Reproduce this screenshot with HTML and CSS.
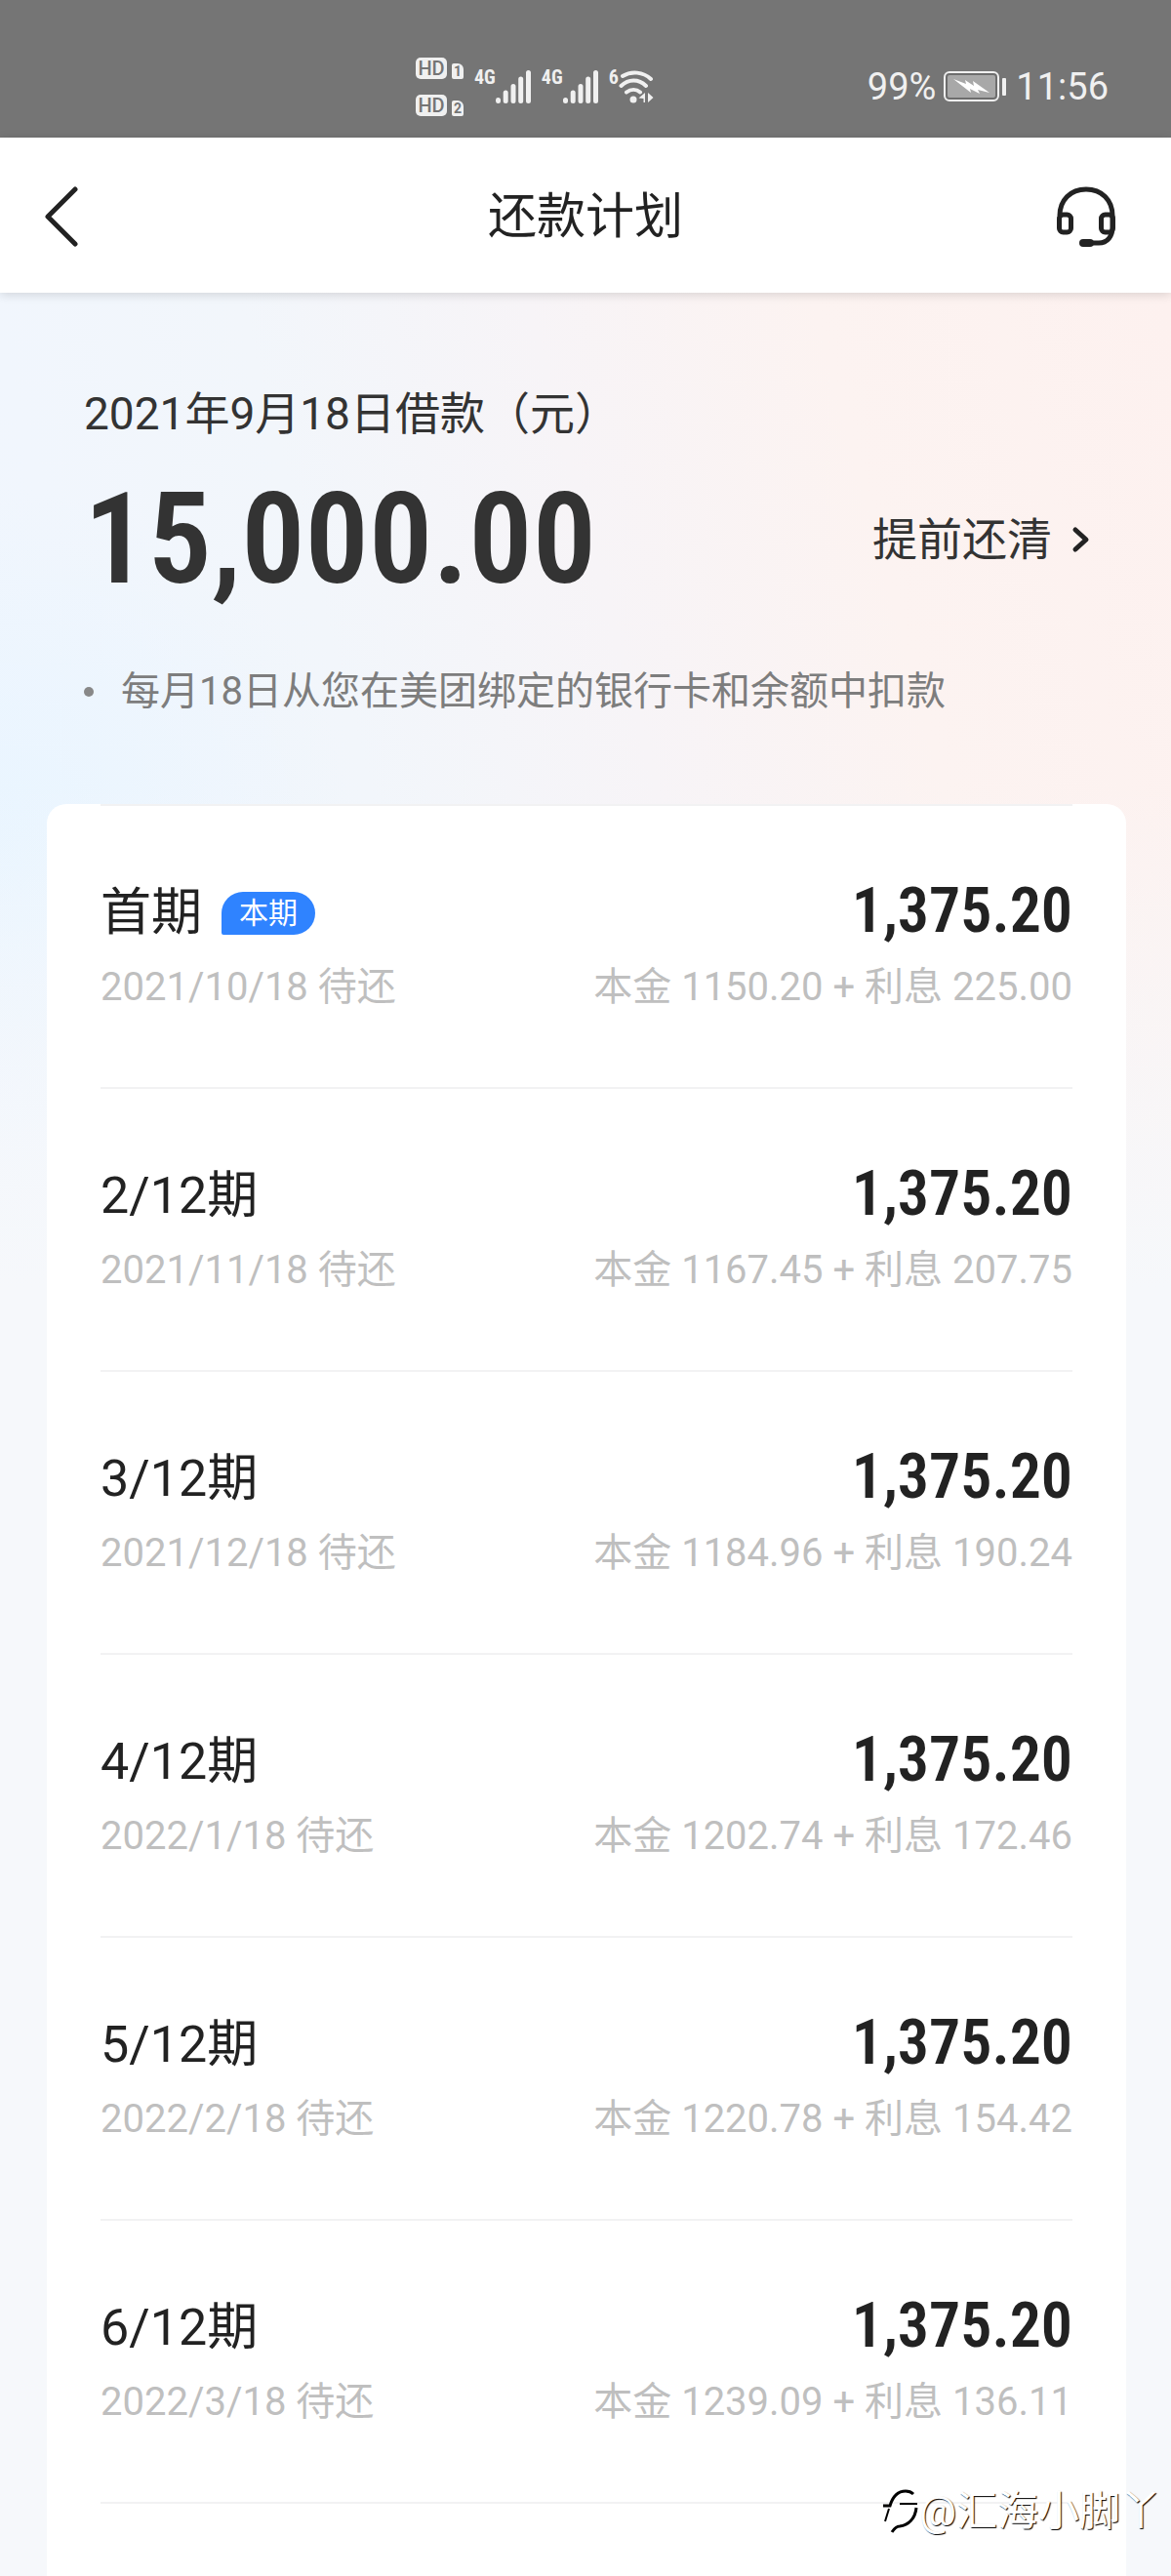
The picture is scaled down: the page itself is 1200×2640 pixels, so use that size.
FILE: index.html
```html
<!DOCTYPE html>
<html lang="zh-CN">

<head>
    <meta charset="UTF-8">
    <meta name="viewport" content="width=device-width, initial-scale=1.0">
    <title>还款计划</title>
    <link rel="stylesheet" href="styles.css">
</head>

<body>
    <!-- 状态栏 -->
    <div class="status">
        <div class="status-net">
            <div class="hd-list">
                <p class="hd"><span class="hd-tag">HD</span><span class="sim">1</span></p>
                <p class="hd"><span class="hd-tag">HD</span><span class="sim">2</span></p>
            </div>
            <div class="signal">
                <span class="net-type">4G</span>
                <svg width="36" height="36" viewBox="0 0 36 36" stroke="#f0f0f0" stroke-width="5" stroke-linecap="round">
                    <path d="M2.5 31.5v1M10.2 24v8.5M18 17.5v15M25.7 10v22.5M33.5 3.5v29" />
                </svg>
            </div>
            <div class="signal">
                <span class="net-type">4G</span>
                <svg width="36" height="36" viewBox="0 0 36 36" stroke="#f0f0f0" stroke-width="5" stroke-linecap="round">
                    <path d="M2.5 31.5v1M10.2 24v8.5M18 17.5v15M25.7 10v22.5M33.5 3.5v29" />
                </svg>
            </div>
            <div class="signal wifi">
                <span class="net-type">6</span>
                <svg width="36" height="36" viewBox="0 0 36 36" fill="none" stroke="#f0f0f0" stroke-width="4" stroke-linecap="round">
                    <path d="M4 7C13 1.5 25 2.5 33 10M2.5 17C10 10 20 9.5 28 17M8 23.5C12.5 20 18 20 22 23.5" />
                    <circle cx="15" cy="31" r="3.5" fill="#f0f0f0" stroke="none" />
                    <path d="M27 24v10h-1.5v-4l-5-.5zM30 24l5.500 5-5.500 5z" fill="#f0f0f0" stroke="none" />
                </svg>
            </div>
        </div>
        <div class="status-info">
            <span>99%</span>
            <svg width="66" height="32" viewBox="0 0 66 32">
                <rect x="1" y="1" width="55" height="29" rx="5" fill="#6d6d6d" stroke="#f0f0f0" stroke-width="2" />
                <rect x="4" y="4" width="49" height="23" rx="2" fill="#a8a8a8" />
                <path d="M10 8l13 5-1-4 9 6-1-5 17 12-12-3 2 4-10-5 1 4z" fill="#fff" />
                <rect x="60" y="7" width="4" height="18" rx="1" fill="#f0f0f0" />
            </svg>
            <span>11:56</span>
        </div>
    </div>

    <!-- 标题栏 -->
    <header class="header">
        <button class="icon-btn" aria-label="返回">
            <svg width="36" height="64" viewBox="0 0 36 64" fill="none" stroke="#222" stroke-width="5" stroke-linecap="round" stroke-linejoin="round">
                <path d="M31 4L3 32l28 28" />
            </svg>
        </button>
        <h1 class="title">还款计划</h1>
        <button class="icon-btn" aria-label="客服">
            <svg width="72" height="62" viewBox="0 0 72 62" fill="none" stroke="#222" stroke-width="5">
                <path d="M4 30C4 14 15 3 31 3s27 11 27 27v12c0 9-5 16-14 16H30" />
                <rect x="3.5" y="29" width="12" height="18" rx="4" />
                <rect x="46.5" y="29" width="12" height="18" rx="4" />
                <path d="M28 58h7" stroke-width="8" stroke-linecap="round" />
            </svg>
        </button>
    </header>

    <main class="main">
        <section class="loan">
            <p class="loan-date">2021年9月18日借款（元）</p>
            <div class="loan-row">
                <p class="loan-total">15,000.00</p>
                <a class="prepay" href="#">提前还清
                    <svg width="20" height="30" viewBox="0 0 20 30" fill="none" stroke="#222" stroke-width="5" stroke-linecap="round" stroke-linejoin="round">
                        <path d="M4 5l11 10L4 25" />
                    </svg>
                </a>
            </div>
            <ul class="loan-note">
                <li>每月18日从您在美团绑定的银行卡和余额中扣款</li>
            </ul>
        </section>

        <!-- 分期列表 -->
        <ul class="plan">
            <li class="plan-item">
                <p class="plan-name">首期<span class="badge">本期</span></p>
                <p class="plan-money">1,375.20</p>
                <p class="plan-sub">2021/10/18 待还</p>
                <p class="plan-sub">本金 1150.20 + 利息 225.00</p>
            </li>
            <li class="plan-item">
                <p class="plan-name">2/12期</p>
                <p class="plan-money">1,375.20</p>
                <p class="plan-sub">2021/11/18 待还</p>
                <p class="plan-sub">本金 1167.45 + 利息 207.75</p>
            </li>
            <li class="plan-item">
                <p class="plan-name">3/12期</p>
                <p class="plan-money">1,375.20</p>
                <p class="plan-sub">2021/12/18 待还</p>
                <p class="plan-sub">本金 1184.96 + 利息 190.24</p>
            </li>
            <li class="plan-item">
                <p class="plan-name">4/12期</p>
                <p class="plan-money">1,375.20</p>
                <p class="plan-sub">2022/1/18 待还</p>
                <p class="plan-sub">本金 1202.74 + 利息 172.46</p>
            </li>
            <li class="plan-item">
                <p class="plan-name">5/12期</p>
                <p class="plan-money">1,375.20</p>
                <p class="plan-sub">2022/2/18 待还</p>
                <p class="plan-sub">本金 1220.78 + 利息 154.42</p>
            </li>
            <li class="plan-item">
                <p class="plan-name">6/12期</p>
                <p class="plan-money">1,375.20</p>
                <p class="plan-sub">2022/3/18 待还</p>
                <p class="plan-sub">本金 1239.09 + 利息 136.11</p>
            </li>
        </ul>
    </main>

    <!-- 水印 -->
    <p class="watermark">
        <svg width="38" height="46" viewBox="0 0 38 46" fill="none" stroke="#000" stroke-width="3">
            <path d="M1 17h7C11 7 17 2 24 2c3 0 6 1 8 3" />
            <path d="M18 15h18M7 20L3 33" stroke-width="2" />
            <path d="M35 19c-1 11-8 18-17 19-4 0-6 3-8 6" />
        </svg>
        <span>@汇海小脚丫</span>
    </p>
</body>

</html>
```
FILE: styles.css
```css
* {
    margin: 0;
    padding: 0;
    box-sizing: border-box;
}

body {
    display: flex;
    flex-direction: column;
    position: relative;
    min-height: 100vh;
    font-family: Roboto, "Noto Sans CJK SC", sans-serif;
    font-size: 40px;
    line-height: 56px;
    color: #222;
    background-color: #f6f8fb;
}

ul {
    list-style: none;
}

svg {
    display: block;
    flex: none;
}

/* 状态栏 */
.status {
    display: grid;
    grid-template-columns: 1fr auto;
    align-items: center;
    height: 141px;
    padding: 36px 64px 0 426px;
    background-color: #757575;
    color: #f0f0f0;
}

.status-net {
    display: flex;
    align-items: center;
    gap: 11px;
}

.hd-list {
    display: grid;
    gap: 16px;
}

.hd {
    display: flex;
    align-items: flex-end;
    gap: 5px;
    height: 22px;
}

.hd-tag {
    width: 32px;
    border-radius: 5px;
    background-color: #f0f0f0;
    color: #757575;
    font-size: 20px;
    font-weight: 500;
    line-height: 22px;
    text-align: center;
}

.sim {
    width: 12px;
    border-radius: 2px 6px 2px 2px;
    background-color: #f0f0f0;
    color: #757575;
    font-size: 14px;
    font-weight: bold;
    line-height: 16px;
    text-align: center;
}

.signal {
    display: flex;
    align-items: flex-start;
}

.net-type {
    font-family: "Roboto Condensed", Roboto, sans-serif;
    font-size: 20px;
    font-weight: bold;
    line-height: 16px;
}

.status-info {
    display: flex;
    align-items: center;
    gap: 8px;
    font-size: 38px;
}

/* 标题栏 */
.header {
    display: grid;
    grid-template-columns: 1fr auto 1fr;
    align-items: center;
    z-index: 1;
    height: 159px;
    padding: 2px 46px 0;
    background-color: #fff;
    box-shadow: 0 2px 10px rgba(0, 0, 0, .14);
}

.title {
    font-size: 50px;
    font-weight: normal;
}

.icon-btn {
    border: 0;
    background: none;
    cursor: pointer;
}

.icon-btn:first-child {
    justify-self: start;
}

.icon-btn:last-child {
    justify-self: end;
}

.main {
    display: flex;
    flex: 1;
    flex-direction: column;
    padding: 92px 46px 0 48px;
    background-image:
        linear-gradient(to bottom, rgba(246, 248, 251, 0) 500px, #f6f8fb 1020px),
        radial-gradient(circle at 0 560px, #e9f5ff 0, rgba(233, 245, 255, 0) 360px),
        linear-gradient(75deg, #f0f6ff 0, #f2f6fb 35%, #f7f4f7 55%, #fcf3f1 75%, #fdf1ef 100%);
    background-size: 100% 1020px;
    background-repeat: no-repeat;
}

/* 借款信息 */
.loan {
    padding: 0 36px 87px 38px;
    color: #333;
}

.loan-date {
    font-size: 46px;
    line-height: 64px;
}

.loan-row {
    display: flex;
    align-items: center;
    justify-content: space-between;
    margin: 37px 0 68px;
}

.loan-total {
    font-family: "Roboto Condensed", Roboto, sans-serif;
    font-size: 130px;
    font-weight: 600;
    line-height: 120px;
}

.prepay {
    display: flex;
    align-items: center;
    gap: 20px;
    color: #333;
    font-size: 46px;
    text-decoration: none;
}

.loan-note li {
    display: flex;
    align-items: center;
    gap: 28px;
    color: #7d7d7d;
}

.loan-note li::before {
    content: "";
    width: 10px;
    height: 10px;
    border-radius: 50%;
    background-color: #888;
}

/* 分期列表 */
.plan {
    flex: 1;
    padding: 0 55px;
    border-radius: 20px 20px 0 0;
    background-color: #fff;
}

.plan-item {
    display: grid;
    grid-template-columns: auto auto;
    justify-content: space-between;
    row-gap: 12px;
    padding: 74px 0;
    border-top: 2px solid #f2f2f3;
}

.plan-item:last-child {
    border-bottom: 2px solid #f2f2f3;
}

.plan-name {
    display: flex;
    align-items: center;
    gap: 20px;
    font-size: 52px;
    line-height: 72px;
}

.badge {
    padding: 0 18px;
    border-radius: 22px 22px 22px 2px;
    background-color: #2f83ff;
    color: #fff;
    font-size: 30px;
    line-height: 44px;
}

.plan-money {
    font-family: "Roboto Condensed", Roboto, sans-serif;
    font-size: 64px;
    font-weight: 600;
    line-height: 68px;
    text-align: right;
}

.plan-sub {
    color: #bfbfbf;
}

.plan-sub:last-child {
    text-align: right;
}

/* 水印 */
.watermark {
    display: flex;
    align-items: center;
    position: absolute;
    right: 10px;
    bottom: 38px;
    color: #fff;
    font-size: 42px;
    text-shadow: 1px 1px 1px #000;
}
```
